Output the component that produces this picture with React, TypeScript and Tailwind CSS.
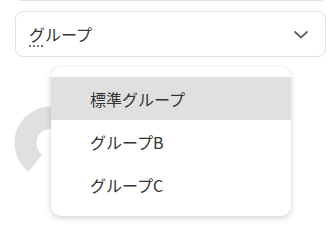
import { useState } from 'react'

const groups = ['標準グループ', 'グループB', 'グループC']

function Donut() {
  // only the empty (gray) part of the ring is visible; the rest sits behind the menu
  return (
    <svg width="80" height="80" viewBox="0 0 80 80" className="block">
      <path
        d="M 24.3 60.1 A 25.5 25.5 0 1 1 65.5 40"
        fill="none"
        stroke="#e0e0e0"
        strokeWidth={22}
      />
    </svg>
  )
}

export default function App() {
  const [selected] = useState(0)

  return (
    <div className="relative w-[334px] h-[233px] overflow-hidden bg-white font-['Noto_Sans_CJK_JP','Noto_Sans',sans-serif] text-[#333]">
      {/* bottom edge of the field above */}
      <div className="ml-[15px] mr-[8px] -mt-[11px] h-[12px] rounded-lg border border-[#e0e0e0]" />

      {/* Select */}
      <div className="ml-[15px] mr-[8px] mt-[10px] h-[46px] rounded-lg border border-[#e0e0e0] flex items-center justify-between pl-[13px] pr-[16px]">
        <span className="text-base leading-none">
          <span className="underline decoration-dotted decoration-[#555] underline-offset-[5px]">グ</span>ループ
        </span>
        <svg width="16" height="9" viewBox="0 0 16 9" fill="none" stroke="#666" strokeWidth={2}>
          <path d="M1.5 1.5 8 7.5 14.5 1.5" />
        </svg>
      </div>

      {/* Chart */}
      <div className="ml-[11px] mt-[46px]">
        <Donut />
      </div>

      {/* Dropdown menu */}
      <div className="absolute left-[51px] top-[67px] w-[240px] rounded-[10px] bg-white py-[10px] shadow-[0_2px_6px_rgba(0,0,0,0.18)]">
        {groups.map((g, i) => (
          <div
            key={g}
            className={`h-[43px] flex items-center pl-[39px] text-base ${i === selected ? 'bg-[#e0e0e0]' : ''}`}
          >
            {g}
          </div>
        ))}
      </div>
    </div>
  )
}
